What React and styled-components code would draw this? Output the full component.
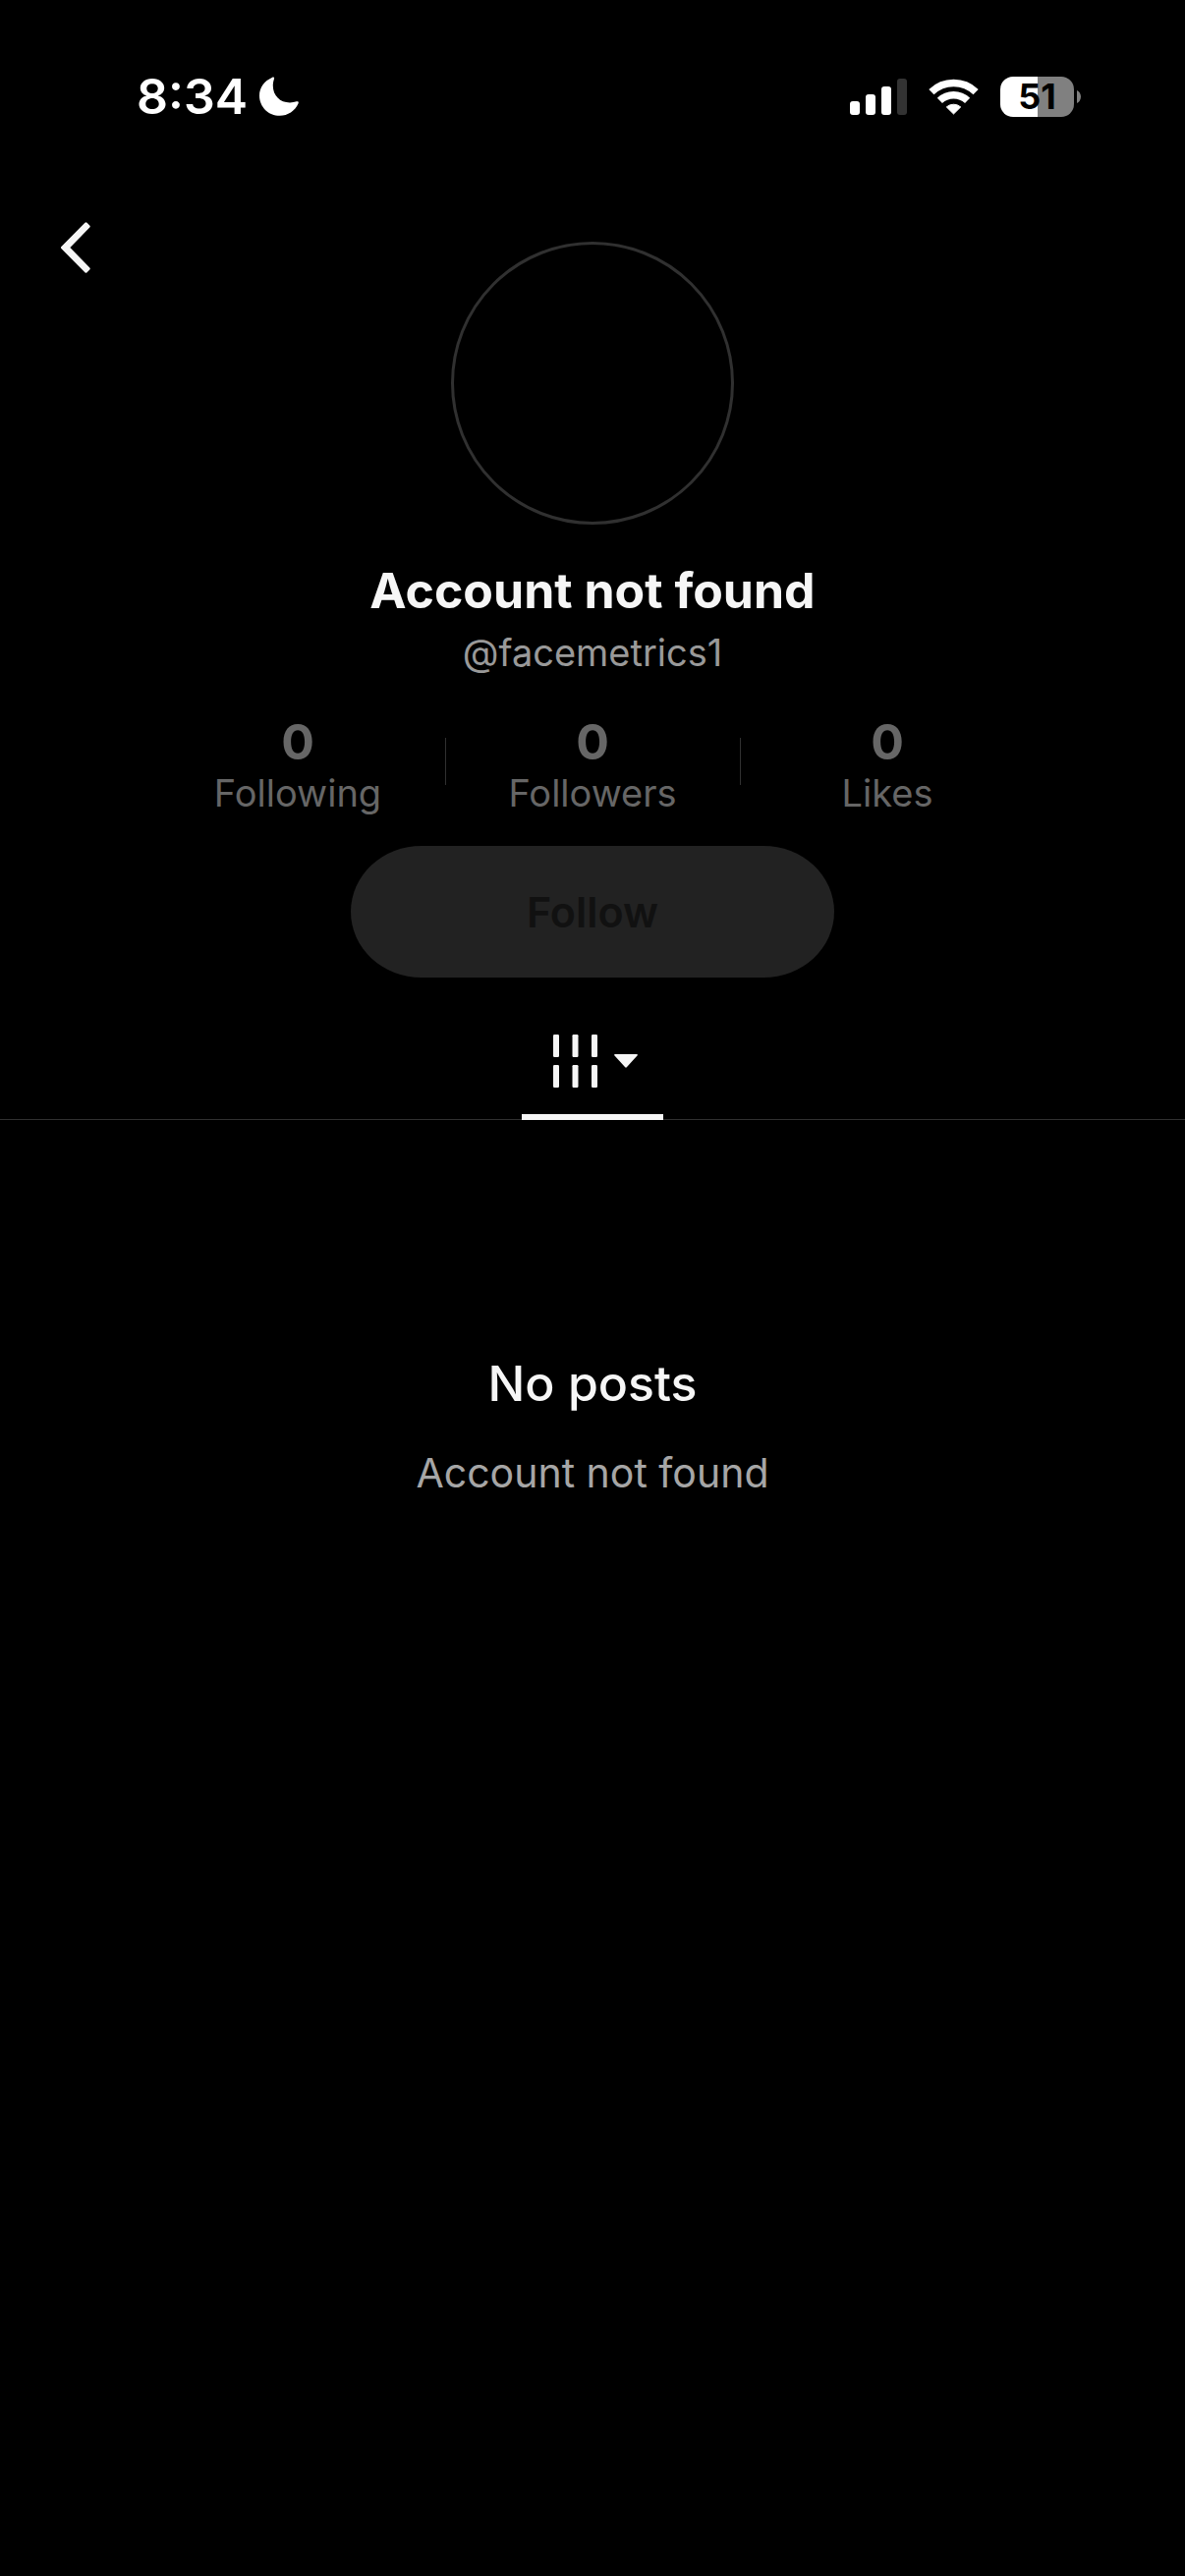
import styled, { createGlobalStyle } from "styled-components";

const GlobalStyle = createGlobalStyle`
  * {
    box-sizing: border-box;
  }

  body {
    margin: 0;
    background: #000;
    color: #f6f6f6;
    font-family: Inter, "Liberation Sans", sans-serif;
  }

  h1, h2, p, dl, dt, dd {
    margin: 0;
  }

  button {
    border: none;
    padding: 0;
    background: none;
    color: inherit;
    font-family: inherit;
  }

  svg {
    display: block;
  }
`;

const Page = styled.div`
  min-height: 100vh;
  display: flex;
  flex-direction: column;
`;

const StatusBar = styled.header`
  display: flex;
  align-items: center;
  justify-content: space-between;
  height: 196px;
  padding: 0 106px 0 139px;
  color: #fff;
`;

const StatusGroup = styled.div`
  display: flex;
  align-items: center;
  gap: ${({ $gap }) => $gap}px;
`;

const Clock = styled.time`
  font-size: 50px;
  line-height: 60px;
  font-weight: 600;
`;

const Battery = styled.div`
  display: flex;
  align-items: center;
  gap: 3px;
`;

const BatteryBody = styled.div`
  display: flex;
  align-items: center;
  justify-content: center;
  width: 75px;
  height: 41px;
  border-radius: 13px;
  color: #000;
  font-size: 36px;
  line-height: 41px;
  font-weight: 700;
`;

const Top = styled.div`
  display: grid;
  grid-template-columns: 1fr auto 1fr;
  align-items: start;
  padding: 0 32px;
`;

const BackButton = styled.button`
  justify-self: start;
  padding: 30px;
  cursor: pointer;
`;

const Avatar = styled.div`
  width: 288px;
  height: 288px;
  margin-top: 50px;
  border: 3px solid #303030;
  border-radius: 50%;
`;

const Profile = styled.section`
  display: flex;
  flex-direction: column;
  align-items: center;
  padding-top: 37px;
`;

const Name = styled.h1`
  font-size: 50px;
  line-height: 60px;
  font-weight: 700;
`;

const Handle = styled.p`
  margin-top: 9px;
  color: #999;
  font-size: 38px;
  line-height: 48px;
`;

const Stats = styled.dl`
  display: flex;
  align-items: center;
  margin-top: 39px;
`;

const Stat = styled.div`
  display: flex;
  flex-direction: column-reverse;
  width: 300px;
  color: #666;
  text-align: center;
`;

const StatLabel = styled.dt`
  font-size: 38px;
  line-height: 48px;
`;

const StatValue = styled.dd`
  font-size: 50px;
  line-height: 56px;
  font-weight: 700;
`;

const Divider = styled.div`
  width: 1px;
  height: 48px;
  margin: 0 -1px 8px 0;
  background: #303030;
`;

const FollowButton = styled.button`
  width: 492px;
  height: 134px;
  margin-top: 30px;
  border-radius: 72px / 67px;
  background: #222;
  color: #111;
  font-size: 43px;
  line-height: 52px;
  font-weight: 600;
`;

const TabBar = styled.nav`
  display: flex;
  justify-content: center;
  margin-top: 26px;
  box-shadow: inset 0 -1px #303030;
`;

const Tab = styled.button`
  display: flex;
  align-items: center;
  justify-content: center;
  gap: 17px;
  width: 144px;
  height: 119px;
  padding: 5px 0 0 6px;
  border-bottom: 6px solid #f6f6f6;
  cursor: pointer;
`;

const EmptyState = styled.main`
  display: flex;
  flex-direction: column;
  align-items: center;
  gap: 35px;
  padding-top: 238px;
`;

const EmptyTitle = styled.h2`
  font-size: 50px;
  line-height: 60px;
  font-weight: 500;
`;

const EmptyText = styled.p`
  color: #a6a6a6;
  font-size: 41px;
  line-height: 52px;
`;

const MoonIcon = () => (
  <svg width="40" height="40" viewBox="0 0 40 40" fill="#fff" aria-hidden="true">
    <path d="M12.8 1C5.2 4.2 0 11.3 0 19.2C0 30.8 9.3 39.8 20.8 39.8C28.8 39.8 36.3 34.8 39.6 27.2C40.2 25.6 39.3 24.8 37.8 25.3C35.8 26 33.5 26.4 31 26.4C21 26.4 13.8 19.2 13.8 9.2C13.8 6.8 14.2 4.3 15 2.2C15.5 .6 14.4 .2 12.8 1Z" />
  </svg>
);

const SignalIcon = () => (
  <svg width="58" height="37" viewBox="0 0 58 37" fill="#fff" aria-hidden="true">
    <rect x="0" y="23" width="10" height="14" rx="3" />
    <rect x="16" y="16" width="10" height="21" rx="3" />
    <rect x="32" y="8" width="10" height="29" rx="3" />
    <rect x="48" y="0" width="10" height="37" rx="3" fill="#333" />
  </svg>
);

const WifiIcon = () => (
  <svg width="51" height="37" viewBox="0 0 51 37" fill="none" aria-hidden="true">
    <path d="M2.9 13.6A32.5 32.5 0 0 1 48.1 13.6" stroke="#fff" strokeWidth="7.4" />
    <path d="M11.4 22.4A20.3 20.3 0 0 1 39.6 22.4" stroke="#fff" strokeWidth="7.4" />
    <path
      d="M25.5 36L18.3 28.9A11 11 0 0 1 32.7 28.9Z"
      fill="#fff"
      stroke="#fff"
      strokeLinejoin="round"
    />
  </svg>
);

const BatteryCap = () => (
  <svg width="4" height="13" viewBox="0 0 4 13" fill="#808080" aria-hidden="true">
    <path d="M0 0C2.4 1 4 3.6 4 6.5S2.4 12 0 13Z" />
  </svg>
);

const BackIcon = () => (
  <svg width="30" height="52" viewBox="0 0 30 52" aria-hidden="true">
    <path
      d="M1.5 26L25.5 1.8L28.2 4.5L7.3 26L28.2 47.5L25.5 50.2Z"
      fill="#f6f6f6"
      stroke="#f6f6f6"
      strokeWidth="3"
      strokeLinejoin="round"
    />
  </svg>
);

const GridIcon = () => (
  <svg width="45" height="54" viewBox="0 0 45 54" fill="#f6f6f6" aria-hidden="true">
    {[0, 19.5, 39].map((x) => (
      <g key={x}>
        <rect x={x} y="0" width="6" height="23" rx="1.2" />
        <rect x={x} y="31" width="6" height="23" rx="1.2" />
      </g>
    ))}
  </svg>
);

const CaretIcon = () => (
  <svg width="24" height="14" viewBox="0 0 24 14" fill="#f6f6f6" aria-hidden="true">
    <path d="M1 0H23C24 0 24.2 .9 23.5 1.6L12.8 13.3Q12 14.2 11.2 13.3L.5 1.6C-.2 .9 0 0 1 0Z" />
  </svg>
);

const stats = [
  { label: "Following", value: 0 },
  { label: "Followers", value: 0 },
  { label: "Likes", value: 0 },
];

const BatteryLevel = ({ level }) => (
  <Battery>
    <BatteryBody
      style={{
        background: `linear-gradient(to right, #fff ${level}%, #808080 ${level}%)`,
      }}
    >
      {level}
    </BatteryBody>
    <BatteryCap />
  </Battery>
);

const App = () => {
  return (
    <Page>
      <GlobalStyle />
      <StatusBar>
        <StatusGroup $gap={12}>
          <Clock>8:34</Clock>
          <MoonIcon />
        </StatusGroup>
        <StatusGroup $gap={22}>
          <SignalIcon />
          <WifiIcon />
          <BatteryLevel level={51} />
        </StatusGroup>
      </StatusBar>

      <Top>
        <BackButton type="button" aria-label="Back">
          <BackIcon />
        </BackButton>
        <Avatar />
      </Top>

      <Profile>
        <Name>Account not found</Name>
        <Handle>@facemetrics1</Handle>
        <Stats>
          {stats.map(({ label, value }, index) => [
            index > 0 && <Divider key={`${label}-divider`} />,
            <Stat key={label}>
              <StatLabel>{label}</StatLabel>
              <StatValue>{value}</StatValue>
            </Stat>,
          ])}
        </Stats>
        <FollowButton type="button" disabled>
          Follow
        </FollowButton>
      </Profile>

      <TabBar>
        <Tab type="button" aria-label="Posts">
          <GridIcon />
          <CaretIcon />
        </Tab>
      </TabBar>

      <EmptyState>
        <EmptyTitle>No posts</EmptyTitle>
        <EmptyText>Account not found</EmptyText>
      </EmptyState>
    </Page>
  );
};

export default App;
